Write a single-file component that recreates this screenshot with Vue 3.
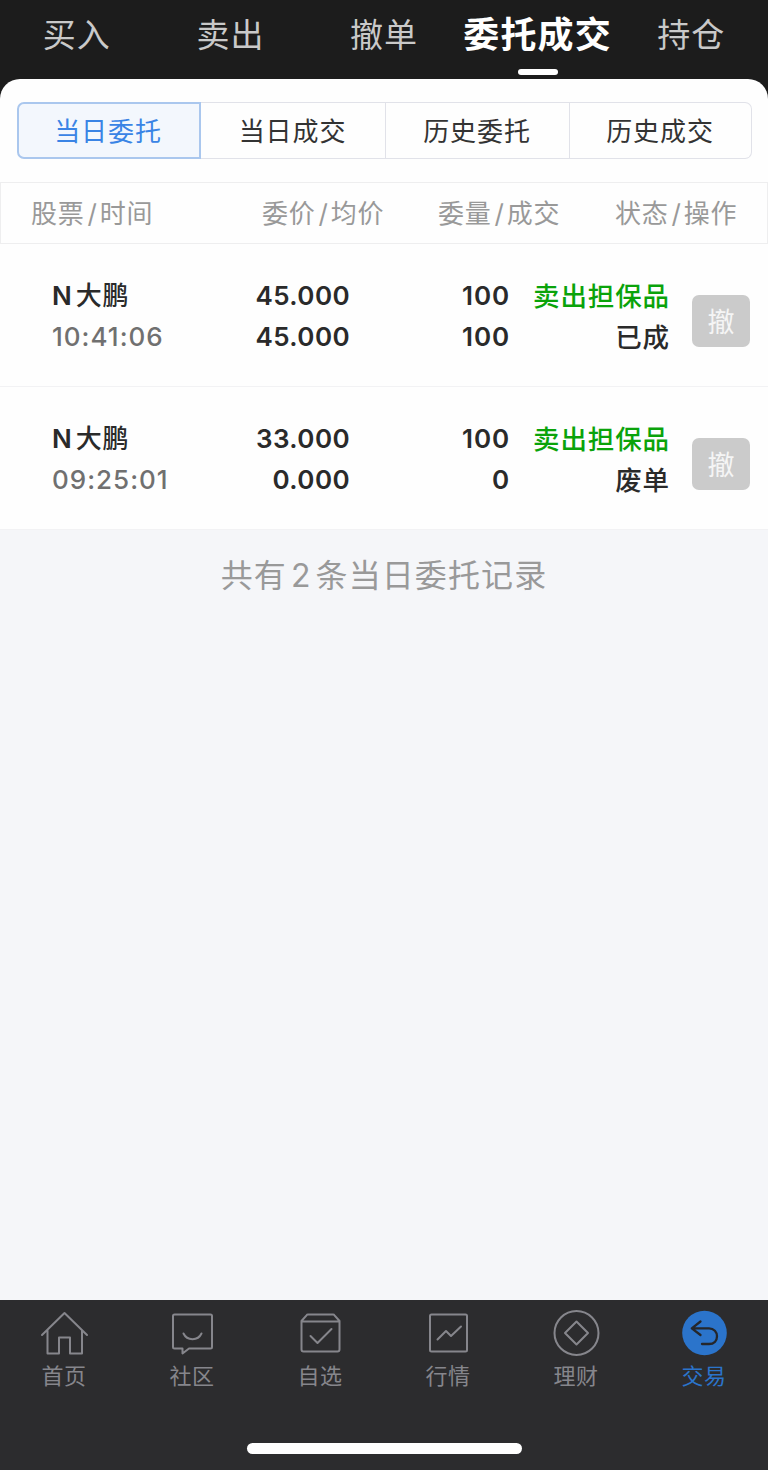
<template>
  <div class="trade-page">
    <nav class="top-nav">
      <div
        v-for="item in topTabs"
        :key="item"
        class="top-item"
        :class="{ active: item === activeTop }"
        @click="activeTop = item"
      >
        <span>{{ item }}</span>
      </div>
    </nav>

    <main class="sheet">
      <div class="segment">
        <div
          v-for="item in segments"
          :key="item"
          class="segment-item"
          :class="{ active: item === activeSegment }"
          @click="activeSegment = item"
        >
          {{ item }}
        </div>
      </div>

      <div class="list-head">
        <span v-for="col in columns" :key="col[0]">{{ col[0] }}<i>/</i>{{ col[1] }}</span>
      </div>

      <div v-for="order in orders" :key="order.time" class="order-row">
        <div class="cell name-cell">
          <div class="name"><b>N</b>{{ order.name }}</div>
          <div class="time">{{ order.time }}</div>
        </div>
        <div class="cell num">
          <div>{{ order.price }}</div>
          <div>{{ order.avg }}</div>
        </div>
        <div class="cell num amount">
          <div>{{ order.amount }}</div>
          <div>{{ order.deal }}</div>
        </div>
        <div class="cell status">
          <div class="sell">{{ order.type }}</div>
          <div>{{ order.status }}</div>
        </div>
        <button class="cancel-btn" disabled>撤</button>
      </div>

      <p class="summary">共有<i>{{ orders.length }}</i>条当日委托记录</p>
    </main>

    <footer class="tab-bar">
      <div class="tabs">
        <div class="tab">
          <svg viewBox="0 0 48 48">
            <path d="M2 24 24.500 2 47 24M7.500 19V42.500H19V26.500H30V42.500H42V19" />
          </svg>
          <span>首页</span>
        </div>
        <div class="tab">
          <svg viewBox="0 0 48 48">
            <path d="M6.500 3.500H42.500Q44 3.500 44 5V36Q44 37.500 42.500 37.500H21L14.500 42.500V37.500H6.500Q5 37.500 5 36V5Q5 3.500 6.500 3.500Z" />
            <path d="M15.500 22.500C19 30 30 30 33.500 22.500" />
          </svg>
          <span>社区</span>
        </div>
        <div class="tab">
          <svg viewBox="0 0 48 48">
            <path d="M5.500 10 10.500 4.300Q11 3.500 12 3.500H37Q38 3.500 38.500 4.300L43.500 10V38.500Q43.500 40.500 41.500 40.500H7.500Q5.500 40.500 5.500 38.500ZM5.500 10.500H43.500" />
            <path d="M14.500 25 21.500 32 35.500 18" />
          </svg>
          <span>自选</span>
        </div>
        <div class="tab">
          <svg viewBox="0 0 48 48">
            <rect x="6" y="3.500" width="37" height="37" rx="1.500" />
            <path d="M13.500 28.500 22 20 27 25 37 15.500" />
          </svg>
          <span>行情</span>
        </div>
        <div class="tab">
          <svg viewBox="0 0 48 48">
            <circle cx="24.500" cy="22" r="22" />
            <path d="M24.500 10.500 36 22 24.500 33.500 13 22Z" />
          </svg>
          <span>理财</span>
        </div>
        <div class="tab active">
          <svg viewBox="0 0 48 48">
            <circle class="disc" cx="24.500" cy="22" r="22.300" />
            <path class="arrow" d="M20.500 10.500 11.800 17.300 20.500 24M11.800 17.300H29C34 17.300 37 21 37 25.200C37 29.800 34 33 29 33H22" />
          </svg>
          <span>交易</span>
        </div>
      </div>
      <div class="home-line"></div>
    </footer>
  </div>
</template>

<script setup>
import { ref } from 'vue'

const topTabs = ['买入', '卖出', '撤单', '委托成交', '持仓']
const activeTop = ref('委托成交')

const segments = ['当日委托', '当日成交', '历史委托', '历史成交']
const activeSegment = ref('当日委托')

const columns = [
  ['股票', '时间'],
  ['委价', '均价'],
  ['委量', '成交'],
  ['状态', '操作'],
]

const orders = [
  {
    name: '大鹏',
    time: '10:41:06',
    price: '45.000',
    avg: '45.000',
    amount: '100',
    deal: '100',
    type: '卖出担保品',
    status: '已成',
  },
  {
    name: '大鹏',
    time: '09:25:01',
    price: '33.000',
    avg: '0.000',
    amount: '100',
    deal: '0',
    type: '卖出担保品',
    status: '废单',
  },
]
</script>

<style>
body {
  margin: 0;
  background: #fff;
}
</style>

<style scoped>
.trade-page {
  width: 768px;
  height: 1470px;
  display: flex;
  flex-direction: column;
  background: #1c1c1c;
  font-family: Inter, "Noto Sans CJK SC", sans-serif;
  overflow: hidden;
}

i {
  font-style: normal;
}

/* 顶部导航 */
.top-nav {
  height: 79px;
  flex: none;
  display: grid;
  grid-template-columns: repeat(5, 1fr);
}

.top-item {
  position: relative;
  display: flex;
  justify-content: center;
  font-size: 33px;
  line-height: 70px;
  letter-spacing: 1px;
  color: #c9c9c9;
  white-space: nowrap;
}

.top-item.active {
  font-size: 36px;
  font-weight: 700;
  letter-spacing: 1.2px;
  color: #fff;
}

.top-item.active::after {
  content: "";
  position: absolute;
  left: 57px;
  bottom: 4px;
  width: 40px;
  height: 6px;
  border-radius: 3px;
  background: #fff;
}

/* 内容区 */
.sheet {
  flex: 1;
  border-radius: 20px 20px 0 0;
  background: linear-gradient(#fefefe 450px, #f5f6f9 450px);
}

.segment {
  display: grid;
  grid-template-columns: 184px 185px 184px 182px;
  grid-template-rows: 57px;
  height: 57px;
  margin: 23px 16px 0 17px;
}

.segment-item {
  box-sizing: border-box;
  border: 1px solid #e1e2e9;
  border-left: none;
  padding-right: 1px;
  font-size: 26px;
  line-height: 58px;
  letter-spacing: 0.9px;
  text-align: center;
  color: #333;
}

.segment-item.active {
  border: 2px solid #aac7ee;
  padding-right: 2px;
  line-height: 56px;
  color: #3a84e5;
  background: #f3f7fd;
}

.segment-item:first-child {
  border-radius: 7px 0 0 7px;
}

.segment-item:last-child {
  border-radius: 0 7px 7px 0;
}

.list-head {
  box-sizing: border-box;
  height: 62px;
  margin-top: 23px;
  padding-left: 30px;
  display: grid;
  grid-template-columns: 231px 176px 177px 1fr;
  grid-template-rows: 60px;
  border: 1px solid #eeeeef;
  font-size: 26px;
  line-height: 62px;
  letter-spacing: 0.8px;
  color: #999;
}

.list-head i {
  margin: 0 2px 0 3px;
}

.order-row {
  box-sizing: border-box;
  height: 143px;
  padding: 31px 18px 0 52px;
  display: grid;
  grid-template-columns: 150px 148px 160px 160px 1fr;
  border-bottom: 1px solid #f2f2f4;
  font-size: 26px;
  font-weight: 600;
  line-height: 41px;
  color: #2a2a2a;
}

.cell {
  text-align: right;
  white-space: nowrap;
}

.name-cell {
  text-align: left;
}

.name {
  font-weight: 500;
  letter-spacing: 0.9px;
}

.name b {
  font-weight: 600;
  margin-right: 3px;
}

.time {
  font-weight: 500;
  letter-spacing: 1px;
  color: #707070;
}

.num {
  letter-spacing: 0.4px;
}

.amount {
  letter-spacing: 0.9px;
}

.status {
  padding-top: 1px;
  font-size: 26.5px;
  font-weight: 500;
  letter-spacing: 0.9px;
}

.sell {
  color: #0aa30a;
}

.cancel-btn {
  justify-self: end;
  width: 58px;
  height: 52px;
  margin-top: 20px;
  padding: 0;
  border: none;
  border-radius: 7px;
  font: 400 27px/52px "Noto Sans CJK SC", sans-serif;
  color: #f5f5f5;
  background: #cbcbcb;
}

.summary {
  margin: 21px 0 0;
  font-size: 32px;
  line-height: 50px;
  letter-spacing: 1.1px;
  text-align: center;
  color: #999;
}

.summary i {
  margin: 0 4px;
}

/* 底部标签栏 */
.tab-bar {
  height: 170px;
  flex: none;
  background: #2c2c2e;
}

.tabs {
  height: 143px;
  display: grid;
  grid-template-columns: repeat(6, 1fr);
}

.tab {
  display: flex;
  flex-direction: column;
  align-items: center;
  padding-top: 11px;
  font-size: 22px;
  line-height: 34px;
  letter-spacing: 0.5px;
  color: #86868c;
}

.tab svg {
  width: 48px;
  height: 48px;
  overflow: visible;
  fill: none;
  stroke: #86868c;
  stroke-width: 2;
  stroke-linecap: round;
  stroke-linejoin: round;
}

.tab.active {
  color: #2b74cb;
}

.tab .disc {
  fill: #2b74cb;
  stroke: none;
}

.tab .arrow {
  stroke: #25272b;
  stroke-width: 2.3;
}

.home-line {
  width: 275px;
  height: 11px;
  margin-left: 247px;
  border-radius: 6px;
  background: #fff;
}
</style>
